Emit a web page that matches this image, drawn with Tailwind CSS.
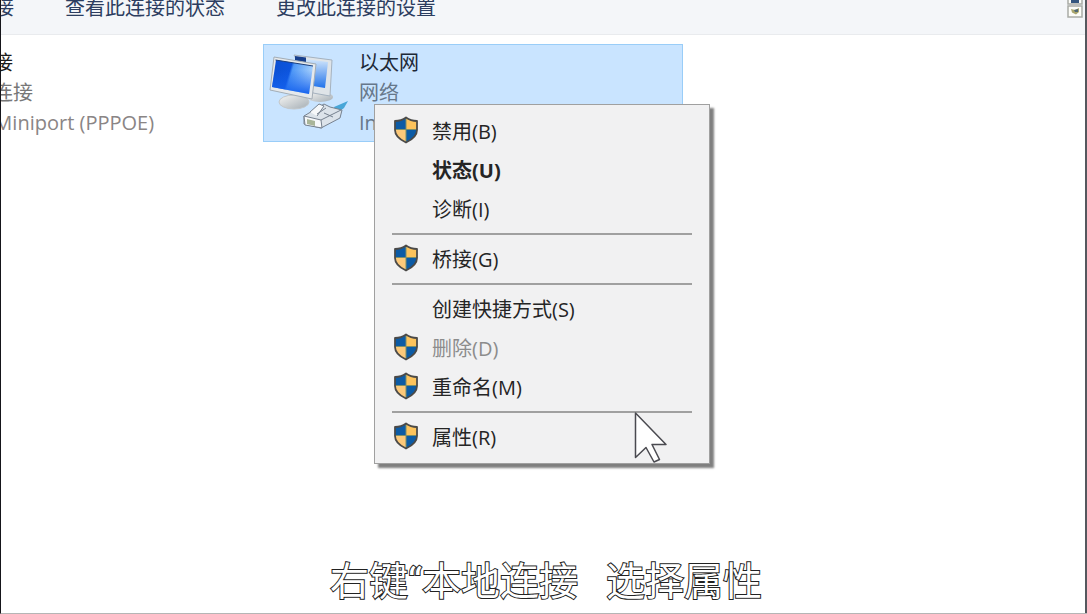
<!DOCTYPE html>
<html lang="zh-CN">
<head>
    <meta charset="UTF-8">
    <meta name="viewport" content="width=device-width, initial-scale=1.0">
    <title>网络连接</title>
    <script src="https://cdn.jsdelivr.net/npm/@tailwindcss/browser@4"></script>
</head>
<body class="bg-white font-['Open_Sans','Noto_Sans_CJK_SC',sans-serif] text-[20px]">

    <!-- shared shield icon -->
    <svg class="hidden">
        <symbol id="shield" viewBox="0 0 26 28">
            <path fill="#0c5ba5" d="M13 1.500C10 3.700 6 5 2 5v8.500h11z"/>
            <path fill="#fcc35c" d="M13 1.500C16 3.700 20 5 24 5v8.500H13z"/>
            <path fill="#fcc97a" d="M2 13.500h11v13C6.500 23.500 2 19.500 2 13.500z"/>
            <path fill="#0c5ba5" d="M24 13.500H13v13c6.500-3 11-7 11-13z"/>
            <path stroke="#7d8f6a" d="M13 2v24M2 13.500h22"/>
            <path fill="none" stroke="#4b4a48" stroke-width="1.800" stroke-linejoin="round" d="M13 1.500C10 3.700 6 5 2 5v9c0 5.500 4.500 9.500 11 12.500 6.500-3 11-7 11-12.500V5c-4 0-8-1.300-11-3.500z"/>
        </symbol>
    </svg>

    <div class="relative min-h-screen overflow-hidden border-l border-b border-l-[#15151a] border-b-[#b5b5b5]">

        <header class="flex h-[35px] items-start justify-between border-b border-[#e9ebee] bg-[#f4f6f9] leading-4 text-[#2c3d60]">
            <nav class="-ml-[107px] flex gap-[51px] whitespace-nowrap">
                <button type="button">诊断这个连接</button>
                <button type="button">查看此连接的状态</button>
                <button type="button">更改此连接的设置</button>
            </nav>
            <button type="button" aria-label="更改视图" class="mr-1">
                <svg class="h-[18px] w-4" viewBox="0 0 16 18">
                    <path fill="#fdfdf8" stroke="#a9aca6" stroke-width="1.500" d="M1-3h14V4H1zM1 6h14v11H1z"/>
                    <path fill="#35567e" d="M4 0h8v3H4z"/>
                    <path fill="#a8a56c" d="M4 9l4 1 4-2v4l-3 2.500-4-2z"/>
                    <path fill="#4f6878" d="M7 10l4-1v3H8z"/>
                </svg>
            </button>
        </header>

        <main class="flex pt-[9px]">
            <section class="w-[262px] shrink-0 pt-1 leading-[30px] whitespace-nowrap">
                <div class="-ml-[68px]">
                    <h2 class="text-[#1c1c1c]">宽带连接</h2>
                    <p class="text-[#777]">已断开连接</p>
                    <p class="text-[#8a8585]">WAN&ensp; Miniport (PPPOE)</p>
                </div>
            </section>

            <section class="flex h-[98px] w-[420px] border border-[#99cdf8] bg-[#c9e4ff] pt-[3px] leading-[30px]">
                <svg class="ml-1 h-[90px] w-[91px] shrink-0" viewBox="268 48 91 90">
                    <defs>
                        <linearGradient id="screen" x1="0" y1="0" x2="1" y2="0.250">
                            <stop offset="0" stop-color="#0a4fd0"/>
                            <stop offset="0.480" stop-color="#0d55de"/>
                            <stop offset="0.540" stop-color="#4f98f6"/>
                            <stop offset="1" stop-color="#a5cffc"/>
                        </linearGradient>
                        <linearGradient id="screenShade" x1="0" y1="0" x2="0" y2="1">
                            <stop offset="0.300" stop-color="#1562ee" stop-opacity="0"/>
                            <stop offset="1" stop-color="#1562ee"/>
                        </linearGradient>
                        <linearGradient id="screenBack" x1="0" y1="0" x2="0" y2="1">
                            <stop offset="0" stop-color="#d9ebfc"/>
                            <stop offset="1" stop-color="#2273ea"/>
                        </linearGradient>
                        <linearGradient id="stand" x1="0" y1="0" x2="1" y2="1">
                            <stop offset="0" stop-color="#f6f6f4"/>
                            <stop offset="1" stop-color="#a4adb4"/>
                        </linearGradient>
                    </defs>
                    <!-- back monitor -->
                    <ellipse cx="320" cy="97" rx="13" ry="5" fill="url(#stand)"/>
                    <path fill="#dfe4e8" stroke="#a5b2bf" d="M294 55l38 5-2 36-17-3z"/>
                    <path fill="url(#screenBack)" d="M297 58l31 4-3 26-12-2z"/>
                    <path fill="#173f8c" d="M295 56l11 1.500v5l-11-2z"/>
                    <!-- front monitor -->
                    <path fill="#c5cbd0" d="M290 90l16 2v10h-15z"/>
                    <ellipse cx="294" cy="102" rx="15" ry="7" fill="url(#stand)" stroke="#c3c7c9"/>
                    <path fill="#e6e9eb" stroke="#a3adb6" d="M274 57l42 7-4 35-42-9z"/>
                    <path fill="url(#screen)" d="M276 60l37 6-4 28-37-7z"/>
                    <path fill="url(#screenShade)" d="M276 60l37 6-4 28-37-7z"/>
                    <path fill="none" stroke="#1c3f7c" d="M275.500 60l37.500 6"/>
                    <!-- network plug -->
                    <path fill="#48a6d8" d="M334 107l14-6-4 7-8 6z"/>
                    <path fill="#dce3ea" stroke="#76818f" stroke-linejoin="round" d="M304 116l20-12 6 3 12 3-2 8-19 10-17-4z"/>
                    <path fill="#f6f8fa" stroke="#76818f" stroke-linejoin="round" d="M304 116l17 4 1 8-17-3zM321 120l20-10M310 112l9-8 5 2-7 10M324 113l9 4M326 108l-9 6"/>
                    <path fill="#a9b599" d="M307 119l8 2v5l-8-2z"/>
                </svg>
                <div>
                    <h2 class="text-[#1d2836]">以太网</h2>
                    <p class="text-[#66778a]">网络</p>
                    <p class="text-[#66778a]">In</p>
                </div>
            </section>
        </main>

        <!-- context menu -->
        <div role="menu" class="absolute top-[104px] left-[373px] w-[336px] border border-[#a0a0a0] bg-[#f1f1f2] pt-[7px] pb-[6px] text-[#252525] shadow-[4px_4px_2px_rgba(0,0,0,0.5)]">
            <button type="button" role="menuitem" class="flex h-[39px] w-full items-center pl-[18px]">
                <svg class="mr-[13px] mb-1 h-7 w-[26px]"><use href="#shield"/></svg>禁用(B)
            </button>
            <button type="button" role="menuitem" class="flex h-[39px] w-full items-center pl-[57px] font-bold">状态(U)</button>
            <button type="button" role="menuitem" class="flex h-[39px] w-full items-center pl-[57px]">诊断(I)</button>
            <hr class="mx-[17px] mt-1 mb-[5px] border-t-2 border-[#a0a0a0]">
            <button type="button" role="menuitem" class="flex h-[39px] w-full items-center pl-[18px]">
                <svg class="mr-[13px] mb-1 h-7 w-[26px]"><use href="#shield"/></svg>桥接(G)
            </button>
            <hr class="mx-[17px] mt-1 mb-[5px] border-t-2 border-[#a0a0a0]">
            <button type="button" role="menuitem" class="flex h-[39px] w-full items-center pl-[57px]">创建快捷方式(S)</button>
            <button type="button" role="menuitem" disabled class="flex h-[39px] w-full items-center pl-[18px] text-[#8c8c8c]">
                <svg class="mr-[13px] mb-1 h-7 w-[26px]"><use href="#shield"/></svg>删除(D)
            </button>
            <button type="button" role="menuitem" class="flex h-[39px] w-full items-center pl-[18px]">
                <svg class="mr-[13px] mb-1 h-7 w-[26px]"><use href="#shield"/></svg>重命名(M)
            </button>
            <hr class="mx-[17px] mt-1 mb-[5px] border-t-2 border-[#a0a0a0]">
            <button type="button" role="menuitem" class="flex h-[39px] w-full items-center pl-[18px]">
                <svg class="mr-[13px] mb-1 h-7 w-[26px]"><use href="#shield"/></svg>属性(R)
            </button>
        </div>

        <!-- mouse pointer -->
        <svg class="absolute top-[411px] left-[632px] h-[54px] w-9" viewBox="0 0 36 54">
            <path fill="#fff" stroke="#4a4a50" stroke-width="1.500" stroke-linejoin="round" d="M2.500 2v44.500L13 36.500l8 14.500 5.500-2.500-7.500-15h14z"/>
        </svg>

        <!-- subtitle -->
        <p class="absolute inset-x-0 bottom-[3px] flex justify-center gap-7 pl-1 font-['Roboto','Noto_Sans_CJK_SC',sans-serif] text-[39px] leading-[56px] whitespace-nowrap text-white [-webkit-text-stroke:2px_#222] [paint-order:stroke_fill]">
            <span>右键“本地连接</span>
            <span>选择属性</span>
        </p>

        <div class="absolute inset-y-0 right-0 w-[2px] bg-[#55585e]"></div>
    </div>

</body>
</html>
